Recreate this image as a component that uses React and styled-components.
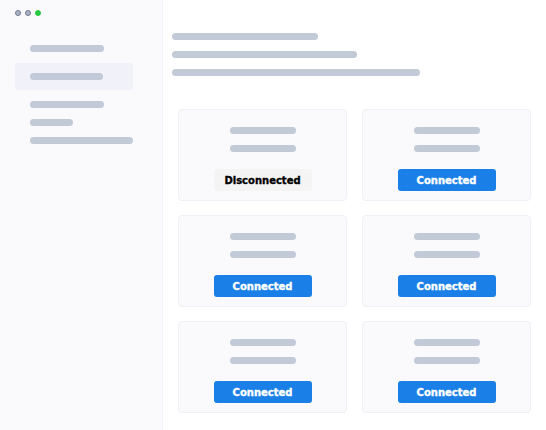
import React from "react";
import styled, { createGlobalStyle } from "styled-components";

const integrations = [
  { id: 1, status: "off" },
  { id: 2, status: "on" },
  { id: 3, status: "on" },
  { id: 4, status: "on" },
  { id: 5, status: "on" },
  { id: 6, status: "on" },
];

function App() {
  return (
    <>
      <GlobalStyle />
      <Window>
        <Sidebar>
          <Dots>
            <Dot />
            <Dot />
            <Dot $green />
          </Dots>
          <Nav>
            <NavItem>
              <Bar $w={74} />
            </NavItem>
            <NavItem $active>
              <Bar $w={73} />
            </NavItem>
            <NavGroup>
              <Bar $w={74} />
              <Bar $w={43} />
              <Bar $w={103} />
            </NavGroup>
          </Nav>
        </Sidebar>
        <Main>
          <Header>
            <Bar $w={146} />
            <Bar $w={185} />
            <Bar $w={248} />
          </Header>
          <Grid>
            {integrations.map((item) => (
              <Card key={item.id}>
                <Lines>
                  <Bar $w={66} />
                  <Bar $w={66} />
                </Lines>
                <StatusButton $on={item.status === "on"}>
                  {item.status === "on" ? "Connected" : "Disconnected"}
                </StatusButton>
              </Card>
            ))}
          </Grid>
        </Main>
      </Window>
    </>
  );
}

const GlobalStyle = createGlobalStyle`
  * { box-sizing: border-box; }
  body {
    margin: 0;
    background: #fff;
    font-family: "DejaVu Sans", "Liberation Sans", sans-serif;
  }
`;
const Window = styled.div`
  width: 546px;
  height: 430px;
  display: flex;
  background: #fff;
  overflow: hidden;
`;
const Sidebar = styled.div`
  width: 163px;
  flex-shrink: 0;
  background: #fafafd;
  border-right: 1px solid #f3f3f8;
  padding: 10px 0 0 15px;
`;
const Dots = styled.div`
  display: flex;
  gap: 4px;
`;
const Dot = styled.span`
  width: 6px;
  height: 6px;
  border-radius: 50%;
  background: ${(p) => (p.$green ? "#27c93f" : "#aab4c6")};
  border: 1px solid ${(p) => (p.$green ? "#27c93f" : "#6f7a8e")};
`;
const Nav = styled.div`
  margin-top: 19px;
  width: 118px;
  display: flex;
  flex-direction: column;
  gap: 1px;
`;
const NavItem = styled.div`
  height: 27px;
  padding: 0 15px;
  display: flex;
  align-items: center;
  border-radius: 3px;
  background: ${(p) => (p.$active ? "#f0f1f9" : "transparent")};
`;
const NavGroup = styled.div`
  padding: 10px 15px 0;
  display: flex;
  flex-direction: column;
  gap: 11px;
`;
const Bar = styled.div`
  width: ${(p) => p.$w}px;
  height: 7px;
  border-radius: 4px;
  background: #c2cad7;
`;
const Main = styled.div`
  flex: 1;
  display: flex;
  flex-direction: column;
`;
const Header = styled.div`
  padding: 33px 0 0 9px;
  display: flex;
  flex-direction: column;
  gap: 11px;
`;
const Grid = styled.div`
  display: grid;
  grid-template-columns: 169px 169px;
  column-gap: 15px;
  row-gap: 14px;
  padding: 33px 0 0 15px;
`;
const Card = styled.div`
  height: 92px;
  background: #fafafd;
  border: 1px solid #f0f0f6;
  border-radius: 4px;
  padding: 17px 0 0;
  display: flex;
  flex-direction: column;
  align-items: center;
`;
const Lines = styled.div`
  display: flex;
  flex-direction: column;
  gap: 11px;
`;
const StatusButton = styled.div`
  margin-top: 17px;
  width: 98px;
  height: 22px;
  border-radius: 3px;
  display: flex;
  align-items: center;
  justify-content: center;
  font-size: 10px;
  font-weight: 700;
  -webkit-text-stroke: 0.35px currentColor;
  color: ${(p) => (p.$on ? "#fff" : "#000")};
  background: ${(p) => (p.$on ? "#1a7fe6" : "#f4f4f5")};
`;

export default App;
